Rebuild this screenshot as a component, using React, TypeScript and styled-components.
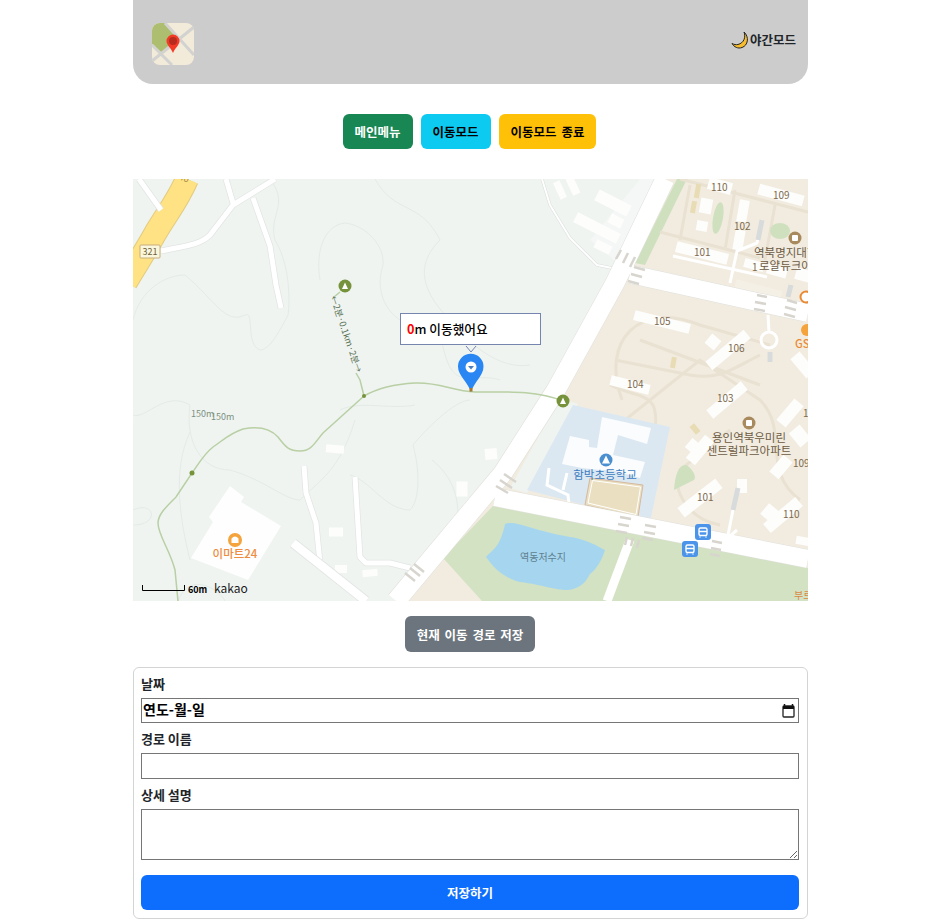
import styled, { createGlobalStyle } from 'styled-components'

const GlobalStyle = createGlobalStyle`
  * {
    box-sizing: border-box;
  }

  body {
    margin: 0;
    background: #fff;
    font-family: "Noto Sans CJK KR", "Noto Sans", sans-serif;
    font-weight: 700;
    color: #212529;
  }
`

const Page = styled.div`
  width: 675px;
  margin-left: 133px;
  display: flex;
  flex-direction: column;
`

const Header = styled.header`
  height: 84px;
  padding: 4px 12px 0 19px;
  background: #ccc;
  border-radius: 0 0 20px 20px;
  display: flex;
  align-items: center;
  justify-content: space-between;
`

const NightMode = styled.div`
  margin-bottom: 8px;
  display: flex;
  align-items: center;
  gap: 1px;
  font-size: 12.5px;
  line-height: 20px;
`

const ButtonRow = styled.div`
  display: flex;
  justify-content: center;
  gap: 8px;
  margin: 30px 2px 30px 0;
`

const Button = styled.button<{ $bg: string; $fg: string }>`
  height: 35px;
  padding: 0 12px;
  border: 0;
  border-radius: 6px;
  background: ${props => props.$bg};
  color: ${props => props.$fg};
  font: inherit;
  font-size: 12.5px;
  word-spacing: 2px;
`

const MapFrame = styled.div`
  position: relative;
  height: 422px;
  overflow: hidden;
`

const MapSvg = styled.svg`
  display: block;
`

const MapLabel = styled.text<{ $color: string; $size?: number; $weight?: number }>`
  fill: ${props => props.$color};
  font-size: ${props => props.$size ?? 11}px;
  font-weight: ${props => props.$weight ?? 400};
  font-family: "Noto Sans CJK KR", "Noto Sans", sans-serif;
`

const InfoBubble = styled.div`
  position: absolute;
  left: 267px;
  top: 134px;
  width: 141px;
  height: 32px;
  padding: 0 0 2px 6px;
  background: #fff;
  border: 1px solid #7684b0;
  display: flex;
  align-items: center;
  font-size: 12.7px;
  font-weight: 500;
  color: #000;
`

const RedNumber = styled.span`
  color: #f00;
  font-weight: 700;
`

const SaveRow = styled.div`
  display: flex;
  justify-content: center;
  margin: 15px 1px 15px 0;
`

const SavePathButton = styled(Button)`
  height: 36px;
  width: 130px;
  padding: 0;
`

const FormCard = styled.form`
  height: 252px;
  padding: 0 8px 8px 7px;
  border: 1px solid #d2d4d6;
  border-radius: 6px;
  display: flex;
  flex-direction: column;
`

const FieldLabel = styled.label`
  display: block;
  height: 30px;
  padding-top: 6px;
  font-size: 13px;
  line-height: 20px;
`

const DateField = styled.div`
  height: 25px;
  padding: 0 3px 4px 1px;
  border: 1px solid #767676;
  display: flex;
  align-items: center;
  justify-content: space-between;
  font-size: 14px;
  color: #000;
`

const TextField = styled.input`
  display: block;
  width: 100%;
  height: 26px;
  margin: 0;
  border: 1px solid #767676;
  border-radius: 0;
`

const TextArea = styled.textarea`
  display: block;
  width: 100%;
  height: 51px;
  margin: 0 0 15px;
  border: 1px solid #767676;
  border-radius: 0;
`

const SubmitButton = styled(Button)`
  width: 100%;
  flex: none;
`

const CalendarMark = styled.svg`
  margin-top: 4px;
`

type Box = [number, number, number, number, number]

const forestBuildings: Box[] = [
  [613, 203, 36, 12, 27], [597, 228, 48, 11, 27], [616, 221, 14, 10, 27], [603, 247, 17, 9, 27],
  [560, 190, 7, 18, -25], [573, 186, 8, 18, -25], [335, 449, 18, 8, 5], [336, 532, 14, 9, 0],
  [341, 569, 12, 8, 0], [370, 573, 15, 7, -5], [462, 489, 11, 15, 0], [491, 454, 12, 11, -5],
]

const urbanBuildings: Box[] = [
  [720, 186, 24, 12, 15], [781, 195, 46, 11, 15], [706, 206, 12, 15, 10], [702, 226, 11, 10, 10],
  [743, 211, 10, 22, 10], [739, 240, 10, 20, 10], [702, 253, 53, 11, 14], [754, 265, 20, 9, 15],
  [777, 271, 20, 10, 15], [803, 275, 15, 12, 15], [662, 322, 57, 10, 14], [728, 350, 50, 11, -40],
  [713, 342, 12, 12, 40], [630, 385, 40, 10, 14], [803, 365, 12, 25, -40], [727, 400, 45, 11, -40],
  [700, 450, 12, 30, 40], [700, 498, 48, 12, -38], [783, 515, 42, 12, -40], [770, 513, 14, 14, 40],
  [790, 413, 12, 28, 40], [781, 467, 12, 22, 40], [803, 541, 14, 8, 10], [694, 447, 14, 12, 40],
  [800, 436, 14, 18, -40], [742, 486, 10, 14, 0],
]

const contours = [
  'M270 179C290 205 268 215 275 240C290 265 290 300 288 315C280 330 270 350 260 350C245 345 255 310 245 315C225 325 215 300 185 275C165 275 140 290 133 320',
  'M375 179C395 215 420 200 440 240C420 260 415 285 450 320C470 345 500 370 530 365',
  'M320 280C315 250 325 225 345 223C365 225 385 245 383 265C375 290 385 310 400 320',
  'M133 415C145 420 165 390 190 405C185 440 200 470 230 470C265 480 285 500 300 500C320 480 340 470 355 420',
  'M190 432C172 470 180 520 190 560M350 475C370 480 385 510 410 510C420 500 420 470 413 445C425 430 455 400 470 400',
  'M133 510C155 500 160 525 133 525M178 601C190 570 220 590 225 601M432 460C470 490 460 540 440 550',
  'M415 405C390 410 360 400 340 410M500 380C470 370 450 400 440 330',
]

const parkPaths = [
  'M622 400C600 340 640 300 700 325L770 345',
  'M600 440L700 360L760 400C790 430 760 470 800 500',
  'M640 340L760 385M615 360L690 375C720 380 730 370 760 355',
  'M655 430C660 390 640 400 610 385M730 430L680 470C670 490 690 520 720 525',
  'M690 185L680 240M735 190L725 250M775 205L765 260M680 179L808 212M660 232L760 258',
]

const crosswalks = [
  'M621 250L616 259M628 253L623 263M635 257L630 267',
  'M634 267L645 270M631 274L642 277M628 281L639 284',
  'M757 295L767 297M755 302L766 304M754 309L765 311',
  'M787 300L797 303M785 307L796 310M784 314L795 317',
  'M516 482L504 474M512 488L500 480M508 493L496 486',
  'M620 517L631 519M618 524L629 526M616 531L627 533',
  'M645 525L656 527M644 532L655 534M642 538L653 540',
  'M627 537L625 545M633 538L631 546M639 540L637 548',
  'M712 541L722 543M711 548L721 550M710 554L720 556',
  'M414 564L424 572M410 568L420 576M405 573L415 581',
]

const minorRoads = 'M139 179L161 210M161 251C185 246 200 245 210 235L233 205L275 179M226 179L233 203M253 198L270 246L276 285L281 308M304 466L306 493L316 523L320 563M355 477L360 557L366 563L390 563L410 568'
const mainRoad = 'M665 179L615 283L556 390L503 473L396 601'
const crossRoads = 'M630 274L757 302L808 313M495 497L808 559'
const highway = 'M187 179C178 200 168 212 156 232C146 250 138 262 126 282'
const trail = 'M340 292L334 297M356 373L360 380L364 396C378 388 395 384 415 383C440 382 452 391 475 392C505 392 535 390 563 401M364 396L323 433C315 442 312 451 300 451C288 451 285 446 278 437C270 428 258 426 243 429C230 433 222 441 213 447C203 455 198 465 192 473L176 497C168 505 158 514 158 523C158 535 170 550 175 570L178 601'

const BusIcon = ({ x, y }: { x: number; y: number }) => (
  <g transform={`translate(${x} ${y})`}>
    <rect width="16" height="16" rx="3" fill="#4b94ea" />
    <rect x="4" y="4" width="8" height="7.5" rx="1.5" fill="none" stroke="#fff" strokeWidth="1.4" />
    <path d="M4 7.5H12M5 12.5V13.5M11 12.5V13.5" stroke="#fff" strokeWidth="1.4" />
  </g>
)

const MapCanvas = () => (
  <MapSvg width="675" height="422" viewBox="133 179 675 422">
    <rect x="133" y="179" width="675" height="422" fill="#eff4f1" />
    <path d={contours.join('')} fill="none" stroke="#e4ebe6" strokeWidth="1" />
    <path d="M640 179L672 179L620 265L590 240Z" fill="#f4f7f5" />

    {/* built up area and parks */}
    <path d="M665 179H808V601H408L443 558L495 490L556 390L615 283Z" fill="#f2ece0" />
    <path d="M677 179H687L645 265L635 263Z" fill="#cfe0bf" />
    <path d="M493 506L808 568V601H482L443 558Z" fill="#d3e2c2" />
    <path d="M560 398L578 404L527 493L510 488Z" fill="#eff4f1" />
    <path d={parkPaths.join('')} fill="none" stroke="#e9e1d1" strokeWidth="3" />
    <ellipse cx="718" cy="218" rx="5" ry="16" fill="#cfe0bf" transform="rotate(10 718 218)" />
    <ellipse cx="780" cy="231" rx="10" ry="8" fill="#cfe0bf" />
    <path d="M674 490C675 470 682 462 688 466C695 472 696 478 694 480Z" fill="#cfe0bf" />
    <rect x="695" y="184" width="5" height="14" fill="#e8dcb4" transform="rotate(10 697 191)" />
    <rect x="691" y="201" width="5" height="12" fill="#e8dcb4" transform="rotate(10 693 207)" />
    <rect x="671" y="357" width="5" height="11" fill="#e8dcb4" transform="rotate(10 673 362)" />
    <rect x="692" y="424" width="6" height="10" fill="#e8dcb4" transform="rotate(-40 695 429)" />

    {/* school */}
    <path d="M573 405L670 427L650 522L527 490Z" fill="#dbe8f2" />
    <path d="M602 417L651 428L647 444L618 435L613 455L645 462L640 478L612 470L600 470L582 468L562 464L570 436L589 440L589 447L597 448Z" fill="#fbfcfd" />
    <path d="M590 478L643 485L638 517L585 505Z" fill="#eadfc0" stroke="#d6b9a0" strokeWidth="1" />
    <path d="M592.500 480.500L640.500 487L636 514.500L588 503Z" fill="none" stroke="#fff" strokeWidth="1" />
    <path d="M549 468L547 485L568 495L569 505M567 473L563 490" fill="none" stroke="#fff" strokeWidth="3" />

    {/* buildings */}
    {[...forestBuildings, ...urbanBuildings].map(([x, y, w, h, a]) => (
      <rect
        key={`${x}-${y}`}
        x={x - w / 2}
        y={y - h / 2}
        width={w}
        height={h}
        fill="#fdfdfc"
        transform={`rotate(${a} ${x} ${y})`}
      />
    ))}
    <path d="M230 486L244 497L241 502L281 526L248 580L191 558L213 522L209 517Z" fill="#fdfefd" />
    <rect x="735" y="285" width="47" height="8" fill="#f5f0e6" transform="rotate(15 758 289)" />

    {/* pond */}
    <path d="M505 524C515 520 530 530 570 537C590 540 600 548 605 550C602 560 596 570 590 574C585 585 575 590 567 590C555 590 543 585 520 582C505 578 495 570 486 557C492 550 500 548 505 524Z" fill="#a6d6ef" />

    {/* highway */}
    <path d={highway} fill="none" stroke="#e2cb7f" strokeWidth="24" />
    <path d={highway} fill="none" stroke="#fee283" strokeWidth="22" />

    {/* roads */}
    <g fill="none" strokeLinejoin="round">
      <path d={minorRoads} stroke="#e2e5e3" strokeWidth="6.500" />
      <path d={minorRoads} stroke="#fff" strokeWidth="5" />
      <path d="M542 179L550 205L570 238L597 265L612 268" stroke="#d9dedb" strokeWidth="3" />
      <path d="M542 179L550 205L570 238L597 265L612 268" stroke="#fff" strokeWidth="2" />
      <path d="M293 543L366 601" stroke="#e2e5e3" strokeWidth="10" />
      <path d="M293 543L366 601" stroke="#fff" strokeWidth="8.500" />
      <path d={mainRoad} stroke="#e0e0dc" strokeWidth="20" />
      <path d={crossRoads} stroke="#e0e0dc" strokeWidth="19" />
      <path d={mainRoad} stroke="#fff" strokeWidth="19" />
      <path d={crossRoads} stroke="#fff" strokeWidth="18" />
      <path d="M630 540L607 601" stroke="#fff" strokeWidth="9" />
      <path d="M673 256L767 277M762 220L757 243L737 251L730 283M768 315L769 332M737 530L730 536M737 490L728 535" stroke="#fff" strokeWidth="3" />
      <path d="M762 220L758 240M791 285L788 297M770 352L770 362M738 488L733 510" stroke="#d8dbdb" strokeWidth="5" />
      <circle cx="769" cy="340" r="8" stroke="#fff" strokeWidth="3" />
    </g>
    <path d={crosswalks.join('')} stroke="#d7d5ce" strokeWidth="2.500" fill="none" />

    {/* trail */}
    <path d={trail} fill="none" stroke="#b9cfa4" strokeWidth="1.500" />
    <circle cx="364" cy="396" r="2" fill="#76933c" />
    <circle cx="192" cy="473" r="2.500" fill="#76933c" />
    <circle cx="345" cy="286" r="6.500" fill="#76933c" />
    <path d="M345 282.500L348 289H342Z" fill="#fff" />
    <circle cx="563" cy="401" r="6.500" fill="#76933c" />
    <path d="M563 397.500L566 404H560Z" fill="#fff" />
    <MapLabel $color="#587053" $size={9} x="0" y="0" transform="translate(330 297) rotate(71)">←2분·0.1km·2분→</MapLabel>
    <MapLabel $color="#7d8f80" $size={9} x="191" y="417">150m</MapLabel>
    <MapLabel $color="#7d8f80" $size={9} x="211" y="420">150m</MapLabel>

    {/* shield */}
    <rect x="140" y="245" width="20" height="13" rx="1" fill="#fbf7dd" stroke="#c7ae7e" />
    <MapLabel $color="#6f5f3a" $size={9} x="150" y="255" textAnchor="middle">321</MapLabel>
    <MapLabel $color="#a08a44" $size={9} x="183" y="181" transform="rotate(20 183 181)" textAnchor="middle">40</MapLabel>

    {/* labels */}
    <g>
      <MapLabel $color="#7d6a4d" $size={10} x="711" y="191">110</MapLabel>
      <MapLabel $color="#7d6a4d" $size={10} x="773" y="199">109</MapLabel>
      <MapLabel $color="#7d6a4d" $size={10} x="734" y="230">102</MapLabel>
      <MapLabel $color="#7d6a4d" $size={10} x="694" y="256">101</MapLabel>
      <MapLabel $color="#7d6a4d" $size={10} x="654" y="325">105</MapLabel>
      <MapLabel $color="#7d6a4d" $size={10} x="728" y="352">106</MapLabel>
      <MapLabel $color="#7d6a4d" $size={10} x="627" y="388">104</MapLabel>
      <MapLabel $color="#7d6a4d" $size={10} x="717" y="402">103</MapLabel>
      <MapLabel $color="#7d6a4d" $size={10} x="697" y="501">101</MapLabel>
      <MapLabel $color="#7d6a4d" $size={10} x="783" y="518">110</MapLabel>
      <MapLabel $color="#7d6a4d" $size={10} x="793" y="467">109</MapLabel>
      <MapLabel $color="#7d6a4d" $size={10} x="803" y="417">1</MapLabel>
      <MapLabel $color="#6b5a44" $size={11.500} x="754" y="257">역북명지대학</MapLabel>
      <MapLabel $color="#7d6a4d" $size={10} x="752" y="271">1</MapLabel>
      <MapLabel $color="#6b5a44" $size={11.500} x="759" y="270">로얄듀크아</MapLabel>
      <MapLabel $color="#6b5a44" $size={11.500} x="749" y="442" textAnchor="middle">용인역북우미린</MapLabel>
      <MapLabel $color="#6b5a44" $size={11.500} x="749" y="455" textAnchor="middle">센트럴파크아파트</MapLabel>
      <MapLabel $color="#3b7cc0" $size={11.500} x="605" y="479" textAnchor="middle">함박초등학교</MapLabel>
      <MapLabel $color="#5f7f90" $size={10} x="543" y="561" textAnchor="middle">역동저수지</MapLabel>
      <MapLabel $color="#ee8c3f" $size={11.500} $weight={500} x="235" y="558" textAnchor="middle">이마트24</MapLabel>
      <MapLabel $color="#e98a35" $size={11} $weight={500} x="795" y="348">GS</MapLabel>
      <MapLabel $color="#d98a45" $size={10} x="794" y="599">부르</MapLabel>
    </g>

    {/* poi icons */}
    <circle cx="795" cy="238" r="6.500" fill="#a88a5e" />
    <rect x="792" y="235" width="6" height="6" rx="1" fill="#fff" />
    <circle cx="749" cy="423" r="6.500" fill="#a88a5e" />
    <rect x="746" y="420" width="6" height="6" rx="1" fill="#fff" />
    <circle cx="806" cy="297" r="5.500" fill="#fff" stroke="#e98a35" strokeWidth="2" />
    <circle cx="807" cy="330" r="6" fill="#f5a33c" />
    <circle cx="606" cy="460" r="6.500" fill="#4a8fd0" />
    <path d="M606 455.500L610 463.500H602Z" fill="#fff" />
    <circle cx="235" cy="540" r="7" fill="#f5a33c" />
    <path d="M231.500 543V538.500Q235 534.500 238.500 538.500V543Z" fill="#fff" />
    <BusIcon x={695} y={524} />
    <BusIcon x={682} y={541} />

    {/* scale and logo */}
    <path d="M142.500 585V590.500H184.500V585" fill="none" stroke="#000" strokeWidth="1" />
    <MapLabel $color="#000" $size={9} $weight={700} x="188" y="593">60m</MapLabel>
    <MapLabel $color="#1c1c1c" $size={12} $weight={400} x="214" y="593">kakao</MapLabel>

    {/* current position pin */}
    <path d="M466 346L471 352L476 346" fill="none" stroke="#7684b0" strokeWidth="1" />
    <path d="M471 392C468 382 458 376 458 366.500A12.500 12.500 0 0 1 483.500 366.500C483.500 376 474 382 471 392Z" fill="#2a86f3" />
    <circle cx="471" cy="367" r="5.500" fill="#fff" />
    <path d="M468 366H474L471 369.500Z" fill="#4a7fbf" />
    <rect x="469.500" y="388" width="3" height="3.500" fill="#a8752c" />
  </MapSvg>
)

const MapLogo = () => (
  <svg width="42" height="42" viewBox="0 0 42 42">
    <rect width="42" height="42" rx="8" fill="#f2ebda" />
    <path d="M0 8A8 8 0 0 1 8 0H13L29 17L10 30L0 21Z" fill="#adbe71" />
    <path d="M13 0L42 32M42 4L0 38M0 22L20 42" stroke="#d2d2d0" strokeWidth="3" fill="none" />
    <path d="M21 30C19 25 14.500 22 14.500 18A6.500 6.500 0 0 1 27.500 18C27.500 22 23 25 21 30Z" fill="#f23a26" />
    <circle cx="21" cy="18" r="4" fill="#b82c1e" />
  </svg>
)

const Moon = () => (
  <svg width="18" height="18" viewBox="0 0 18 18">
    <path d="M13 1C15 6 13 12 7 13.500C5 14 3 13.500 1 12.500C3 16 7 18 11 16.500C17 14.500 18.500 6 13 1Z" fill="#f7bd2e" stroke="#222" strokeWidth="1" />
  </svg>
)

const CalendarIcon = () => (
  <CalendarMark width="13" height="14" viewBox="0 0 13 14">
    <path d="M2.500 0V2M10.500 0V2" stroke="#111" strokeWidth="1.500" />
    <rect x="1" y="2" width="11" height="11" rx="1" fill="#fff" stroke="#222" strokeWidth="1.300" />
    <rect x="1" y="2" width="11" height="3" fill="#111" />
  </CalendarMark>
)

const App = () => (
  <>
    <GlobalStyle />
    <Page>
      <Header>
        <MapLogo />
        <NightMode>
          <Moon />
          야간모드
        </NightMode>
      </Header>

      <ButtonRow>
        <Button type="button" $bg="#198754" $fg="#fff">메인메뉴</Button>
        <Button type="button" $bg="#0dcaf0" $fg="#000">이동모드</Button>
        <Button type="button" $bg="#ffc107" $fg="#000">이동모드 종료</Button>
      </ButtonRow>

      <MapFrame>
        <MapCanvas />
        <InfoBubble>
          <RedNumber>0</RedNumber>m&nbsp;이동했어요
        </InfoBubble>
      </MapFrame>

      <SaveRow>
        <SavePathButton type="button" $bg="#6c757d" $fg="#fff">현재 이동 경로 저장</SavePathButton>
      </SaveRow>

      <FormCard>
        <FieldLabel>날짜</FieldLabel>
        <DateField>
          연도-월-일
          <CalendarIcon />
        </DateField>
        <FieldLabel>경로 이름</FieldLabel>
        <TextField type="text" />
        <FieldLabel>상세 설명</FieldLabel>
        <TextArea />
        <SubmitButton type="button" $bg="#0d6efd" $fg="#fff">저장하기</SubmitButton>
      </FormCard>
    </Page>
  </>
)

export default App
